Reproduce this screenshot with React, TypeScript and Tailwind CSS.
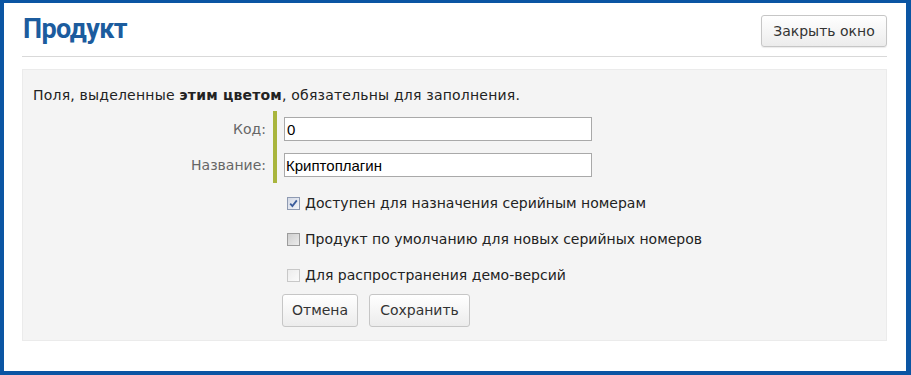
import React from "react";

const Check = ({ checked, tone }: { checked?: boolean; tone: "blue" | "light" | "gray" }) => (
  <span
    className={
      "flex h-[13px] w-[13px] items-center justify-center border " +
      (tone === "gray"
        ? "border-[#9c9c9c] bg-gradient-to-br from-[#cfcfcf] to-[#ececec]"
        : tone === "blue"
        ? "border-[#8e9ab2] bg-gradient-to-br from-[#d3d9e6] to-[#f3f5f9]"
        : "border-[#c8c8c8] bg-gradient-to-br from-[#ececec] to-[#fbfbfb]")
    }
  >
    {checked && (
      <svg width="9" height="9" viewBox="0 0 9 9">
        <path d="M1.2 4.6 L3.4 7 L7.8 1.4" fill="none" stroke="#3a5c9c" strokeWidth="1.8" />
      </svg>
    )}
  </span>
);

const App = () => {
  const boxes = [
    { text: "Доступен для назначения серийным номерам", checked: true, tone: "blue" as const },
    { text: "Продукт по умолчанию для новых серийных номеров", checked: false, tone: "gray" as const },
    { text: "Для распространения демо-версий", checked: false, tone: "light" as const },
  ];

  return (
    <div className="h-[375px] w-[911px] bg-white border-[#0b55a3] border-t-[3px] border-l-4 border-r-[5px] border-b-4 box-border pl-[18px] pr-[19px] font-['DejaVu_Sans',sans-serif]">
      {/* header */}
      <div className="flex items-start justify-between h-[54px] border-b border-[#d9d9d9]">
        <h1 className="mt-[9px] ml-px text-[27px] leading-[34px] font-bold tracking-[-0.6px] text-[#1c5c9e] font-['Roboto',sans-serif]">
          Продукт
        </h1>
        <button className="mt-3 h-8 w-[126px] rounded-[3px] border border-[#c6c6c6] bg-gradient-to-b from-white to-[#ececec] text-[14px] text-[#333] shadow-[0_1px_1px_rgba(0,0,0,0.08)]">
          Закрыть окно
        </button>
      </div>

      {/* form panel */}
      <div className="mt-3 h-[272px] bg-[#f4f4f4] border border-[#ebebeb] pl-[10px] pt-[17px]">
        <p className="text-[14px] leading-4 text-[#222] tracking-[0.2px]">
          Поля, выделенные <b>этим цветом</b>, обязательны для заполнения.
        </p>

        <div className="mt-[8px] flex">
          <div className="w-[233px] flex flex-col text-right text-[14px] text-[#666]">
            <span className="h-9 leading-9">Код:</span>
            <span className="h-9 leading-9">Название:</span>
          </div>
          <div className="ml-[7px] border-l-4 border-[#a9b53d] pl-[7px] flex flex-col">
            <div className="h-9 flex items-center">
              <input
                defaultValue="0"
                className="h-6 w-[308px] border border-[#a9a9a9] bg-white px-[2px] text-[15px] text-black font-['Liberation_Sans',sans-serif] outline-none"
              />
            </div>
            <div className="h-9 flex items-center">
              <input
                defaultValue="Криптоплагин"
                className="h-6 w-[308px] border border-[#a9a9a9] bg-white px-[1px] text-[15px] text-black font-['Liberation_Sans',sans-serif] outline-none"
              />
            </div>
          </div>
        </div>

        <div className="mt-[2px] pl-[254px]">
          {boxes.map((b) => (
            <label key={b.text} className="h-9 flex items-center gap-[5px] text-[14px] text-[#222]">
              <Check checked={b.checked} tone={b.tone} />
              <span>{b.text}</span>
            </label>
          ))}
        </div>

        <div className="mt-px pl-[249px] flex gap-[11px]">
          <button className="h-[33px] w-[76px] rounded-[3px] border border-[#c6c6c6] bg-gradient-to-b from-white to-[#ececec] text-[14px] text-[#333]">
            Отмена
          </button>
          <button className="h-[33px] w-[101px] rounded-[3px] border border-[#c6c6c6] bg-gradient-to-b from-white to-[#ececec] text-[14px] text-[#333]">
            Сохранить
          </button>
        </div>
      </div>
    </div>
  );
};

export default App;
